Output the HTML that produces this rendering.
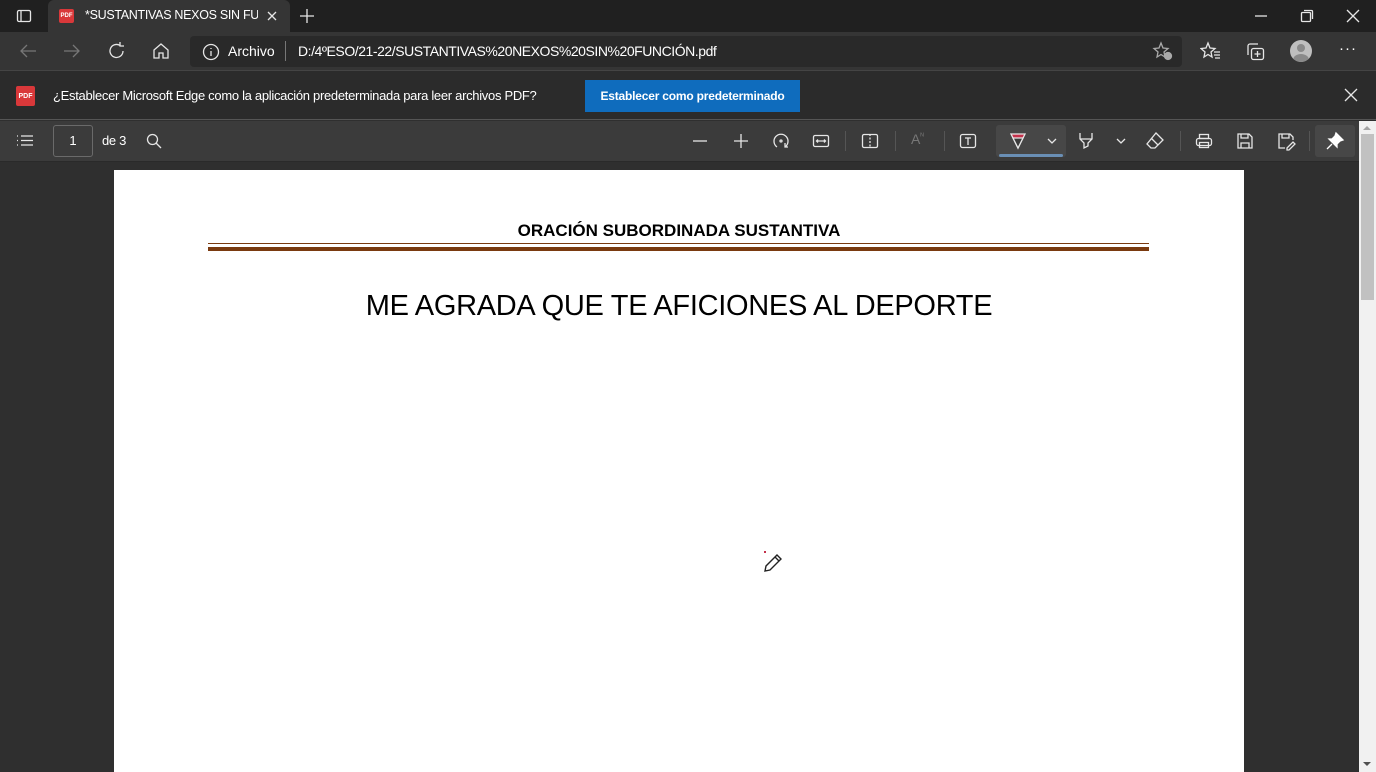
<!DOCTYPE html>
<html><head><meta charset="utf-8"><style>
*{margin:0;padding:0;box-sizing:border-box}
body{width:1376px;height:772px;overflow:hidden;background:#2f2f2f;font-family:"Segoe UI","Liberation Sans","DejaVu Sans",sans-serif;color:#fff;position:relative}
.abs{position:absolute}
svg{position:absolute;fill:none;stroke:#e6e6e6;stroke-width:1.3}
.t{font-size:14px;color:#fff;white-space:nowrap}
</style></head><body>
<div class="abs" style="left:0;top:0;width:1376px;height:32px;background:#202020"></div>
<div class="abs" style="left:48px;top:0;width:242px;height:32px;background:#353535;border-radius:6px 6px 0 0"></div>
<svg style="left:16px;top:8px" width="16" height="16"><rect x="1.5" y="2.5" width="13" height="11" rx="1.5"/><line x1="5" y1="3" x2="5" y2="13"/></svg>
<div class="abs" style="left:59px;top:9px;width:15px;height:14px;background:#d9383a;border-radius:2px;font-size:6px;font-weight:bold;text-align:center;line-height:14px">PDF</div>
<div class="abs t" style="left:85px;top:8px;font-size:12.5px;letter-spacing:-0.3px;width:173px;overflow:hidden">*SUSTANTIVAS NEXOS SIN FUNCIÓN</div>
<svg style="left:266px;top:10px" width="12" height="12"><path d="M2 2L10 10M10 2L2 10"/></svg>
<svg style="left:298px;top:7px" width="18" height="18"><path d="M9 2V16M2 9H16"/></svg>
<svg style="left:1254px;top:8px" width="14" height="16"><path d="M1 8H13"/></svg>
<svg style="left:1300px;top:9px" width="14" height="14"><rect x="1.5" y="3.5" width="9" height="9" rx="1"/><path d="M4 1.5H11.5a1 1 0 0 1 1 1V10"/></svg>
<svg style="left:1346px;top:9px" width="14" height="14"><path d="M1 1L13 13M13 1L1 13"/></svg>
<div class="abs" style="left:0;top:32px;width:1376px;height:38px;background:#353535"></div>
<svg style="left:18px;top:42px;stroke:#777" width="20" height="18"><path d="M18 9H3M9 3L3 9L9 15"/></svg>
<svg style="left:62px;top:42px;stroke:#777" width="20" height="18"><path d="M2 9H17M11 3L17 9L11 15"/></svg>
<svg style="left:107px;top:41px" width="20" height="20"><path d="M16 10A6.5 6.5 0 1 1 13 4.5M13 1V5H17"/></svg>
<svg style="left:151px;top:41px" width="20" height="20"><path d="M3 9L10 3L17 9V17H12V12H8V17H3Z"/></svg>
<div class="abs" style="left:190px;top:36px;width:992px;height:31px;background:#292929;border-radius:4px"></div>
<svg style="left:202px;top:43px" width="18" height="18"><circle cx="9" cy="9" r="7.5"/><path d="M9 8V13M9 5V6"/></svg>
<div class="abs t" style="left:228px;top:43px;font-size:14px">Archivo</div>
<div class="abs" style="left:285px;top:41px;width:1px;height:20px;background:#777"></div>
<div class="abs t" style="left:298px;top:43px;font-size:14px;letter-spacing:-0.45px">D:/4ºESO/21-22/SUSTANTIVAS%20NEXOS%20SIN%20FUNCIÓN.pdf</div>
<svg style="left:1152px;top:41px;stroke:#aaa" width="22" height="20"><path d="M9 2L11 7L16 7.5L12 11L13 16L9 13.5L5 16L6 11L2 7.5L7 7Z"/><circle cx="16" cy="15" r="3.5" fill="#aaa"/></svg>
<svg style="left:1200px;top:41px" width="22" height="20"><path d="M8 2L10 7L15 7.5L11 11L12 16L8 13.5L4 16L5 11L1 7.5L6 7Z"/><path d="M14 11H20M14 14H20M15 17H20"/></svg>
<svg style="left:1245px;top:41px" width="22" height="22"><rect x="6.5" y="7.5" width="12" height="11" rx="2"/><path d="M3 14V5a2 2 0 0 1 2-2H13M12.5 10V16M9.5 13H15.5"/></svg>
<div class="abs" style="left:1290px;top:40px;width:22px;height:22px;border-radius:50%;background:#bfbfbf;overflow:hidden"><div class="abs" style="left:7px;top:4px;width:8px;height:8px;border-radius:50%;background:#8a8a8a"></div><div class="abs" style="left:3px;top:14px;width:16px;height:12px;border-radius:50%;background:#8a8a8a"></div></div>
<div class="abs t" style="left:1339px;top:40px;font-size:15px;letter-spacing:1px">···</div>
<div class="abs" style="left:0;top:70px;width:1376px;height:50px;background:#2b2b2b;border-top:1px solid #444;border-bottom:1px solid #555"></div>
<div class="abs" style="left:16px;top:86px;width:19px;height:20px;background:#d9383a;border-radius:2px;font-size:7px;font-weight:bold;text-align:center;line-height:22px">PDF</div>
<div class="abs t" style="left:53px;top:88px;font-size:13px;letter-spacing:-0.3px">¿Establecer Microsoft Edge como la aplicación predeterminada para leer archivos PDF?</div>
<div class="abs" style="left:585px;top:80px;width:215px;height:32px;background:#0f6cbd;font-size:12px;font-weight:600;text-align:center;line-height:32px;letter-spacing:-0.2px">Establecer como predeterminado</div>
<svg style="left:1344px;top:88px" width="14" height="14"><path d="M1 1L13 13M13 1L1 13"/></svg>
<div class="abs" style="left:0;top:121px;width:1359px;height:41px;background:#3b3b3b;border-bottom:1px solid #2a2a2a"></div>
<svg style="left:15px;top:133px" width="20" height="16"><path d="M2 3H3M2 7.5H3M2 12H3M6 3H18M6 7.5H18M6 12H18"/></svg>
<div class="abs" style="left:53px;top:125px;width:40px;height:32px;border:1px solid #6a6a6a;border-radius:3px;font-size:13px;text-align:center;line-height:30px">1</div>
<div class="abs t" style="left:102px;top:133px;font-size:13px;letter-spacing:-0.3px">de 3</div>
<svg style="left:146px;top:133px" width="16" height="16"><circle cx="6.5" cy="6.5" r="5"/><path d="M10 10L15 15"/></svg>
<svg style="left:690px;top:132px" width="20" height="18"><path d="M3 9H17"/></svg>
<svg style="left:731px;top:132px" width="20" height="18"><path d="M3 9H17M10 2V16"/></svg>
<svg style="left:771px;top:131px" width="20" height="20"><path d="M6 16A7 7 0 1 1 14 16M14 12V16H17"/><circle cx="10" cy="10" r="1"/></svg>
<svg style="left:811px;top:132px" width="20" height="18"><rect x="2.5" y="3.5" width="15" height="11" rx="1.5"/><path d="M6 9H14M7 7.5L5.5 9L7 10.5M13 7.5L14.5 9L13 10.5"/></svg>
<div class="abs" style="left:845px;top:131px;width:1px;height:20px;background:#555"></div>
<svg style="left:860px;top:132px" width="20" height="18"><rect x="2.5" y="2.5" width="15" height="13" rx="1.5"/><path d="M10 2V16" stroke-dasharray="2 1.5"/></svg>
<div class="abs" style="left:895px;top:131px;width:1px;height:20px;background:#555"></div>
<div class="abs t" style="left:911px;top:131px;font-size:14px;color:#777">A<sup style="font-size:8px">ᴺ</sup></div>
<div class="abs" style="left:944px;top:131px;width:1px;height:20px;background:#555"></div>
<svg style="left:958px;top:132px" width="20" height="18"><rect x="2.5" y="2.5" width="15" height="13" rx="2"/><path d="M7 6H13M10 6V13"/></svg>
<div class="abs" style="left:996px;top:125px;width:70px;height:32px;background:#474747;border-radius:3px"></div>
<div class="abs" style="left:999px;top:154px;width:64px;height:3px;background:#6a8fb5;border-radius:2px"></div>
<svg style="left:1008px;top:131px" width="20" height="20"><path d="M3 3H17L10 17Z" fill="#c4314b" stroke="#e6e6e6"/><path d="M5 7H15L10 17Z" fill="#3b3b3b" stroke="#e6e6e6"/></svg>
<svg style="left:1046px;top:136px" width="12" height="10"><path d="M2 3L6 7L10 3"/></svg>
<svg style="left:1076px;top:131px" width="20" height="20"><path d="M4 2V8L8 12V17L12 15V12L16 8V2M4 8H16"/></svg>
<svg style="left:1115px;top:136px" width="12" height="10"><path d="M2 3L6 7L10 3"/></svg>
<svg style="left:1145px;top:131px" width="20" height="20"><path d="M11 2L18 9L10 17H6L2 13Z M6 7L13 14"/></svg>
<div class="abs" style="left:1180px;top:131px;width:1px;height:20px;background:#555"></div>
<svg style="left:1194px;top:131px" width="20" height="20"><rect x="2.5" y="7.5" width="15" height="7" rx="2"/><rect x="5.5" y="3.5" width="9" height="4"/><rect x="5.5" y="11.5" width="9" height="5"/></svg>
<svg style="left:1235px;top:131px" width="20" height="20"><path d="M3 3H14L17 6V17H3Z M6 3V7H13V3 M6 17V12H14V17"/></svg>
<svg style="left:1276px;top:131px" width="20" height="20"><path d="M9 17H3V3H14L17 6V9 M6 3V7H13V3 M11 17L17 11L19 13L13 19H11Z"/></svg>
<div class="abs" style="left:1309px;top:131px;width:1px;height:20px;background:#555"></div>
<div class="abs" style="left:1315px;top:125px;width:40px;height:32px;background:#474747;border-radius:3px"></div>
<svg style="left:1325px;top:131px;fill:#fff;stroke:#fff" width="20" height="20"><path d="M11 2L18 9L15 10L12 13L12 16L4 8L7 8L10 5Z M7 13L2 18"/></svg>
<div class="abs" style="left:1359px;top:121px;width:17px;height:651px;background:#f1f1f1"></div>
<div class="abs" style="left:1361px;top:134px;width:13px;height:166px;background:#c1c1c1"></div>
<div class="abs" style="left:1363px;top:126px;width:0;height:0;border-left:4px solid transparent;border-right:4px solid transparent;border-bottom:4px solid #a3a3a3"></div>
<div class="abs" style="left:1363px;top:762px;width:0;height:0;border-left:4px solid transparent;border-right:4px solid transparent;border-top:4px solid #505050"></div>
<div class="abs" style="left:114px;top:170px;width:1130px;height:602px;background:#fff"></div>
<div class="abs" style="left:114px;top:221px;width:1130px;text-align:center;font-size:17px;font-weight:bold;color:#000;letter-spacing:0px;font-family:'Liberation Sans',sans-serif">ORACIÓN SUBORDINADA SUSTANTIVA</div>
<div class="abs" style="left:208px;top:243px;width:941px;height:1px;background:#7a3a10"></div>
<div class="abs" style="left:208px;top:247px;width:941px;height:4px;background:#7a3a10"></div>
<div class="abs" style="left:114px;top:290px;width:1130px;text-align:center;font-size:29px;color:#000;letter-spacing:-0.3px;font-family:'Liberation Sans',sans-serif">ME AGRADA QUE TE AFICIONES AL DEPORTE</div>
<div class="abs" style="left:764px;top:551px;width:2px;height:2px;background:#c4314b"></div>
<svg style="left:762px;top:552px;stroke:#222;stroke-width:1.4" width="22" height="22"><path d="M3 19L4 14L15 3L19 7L8 18Z M13 5L17 9"/></svg>
</body></html>
